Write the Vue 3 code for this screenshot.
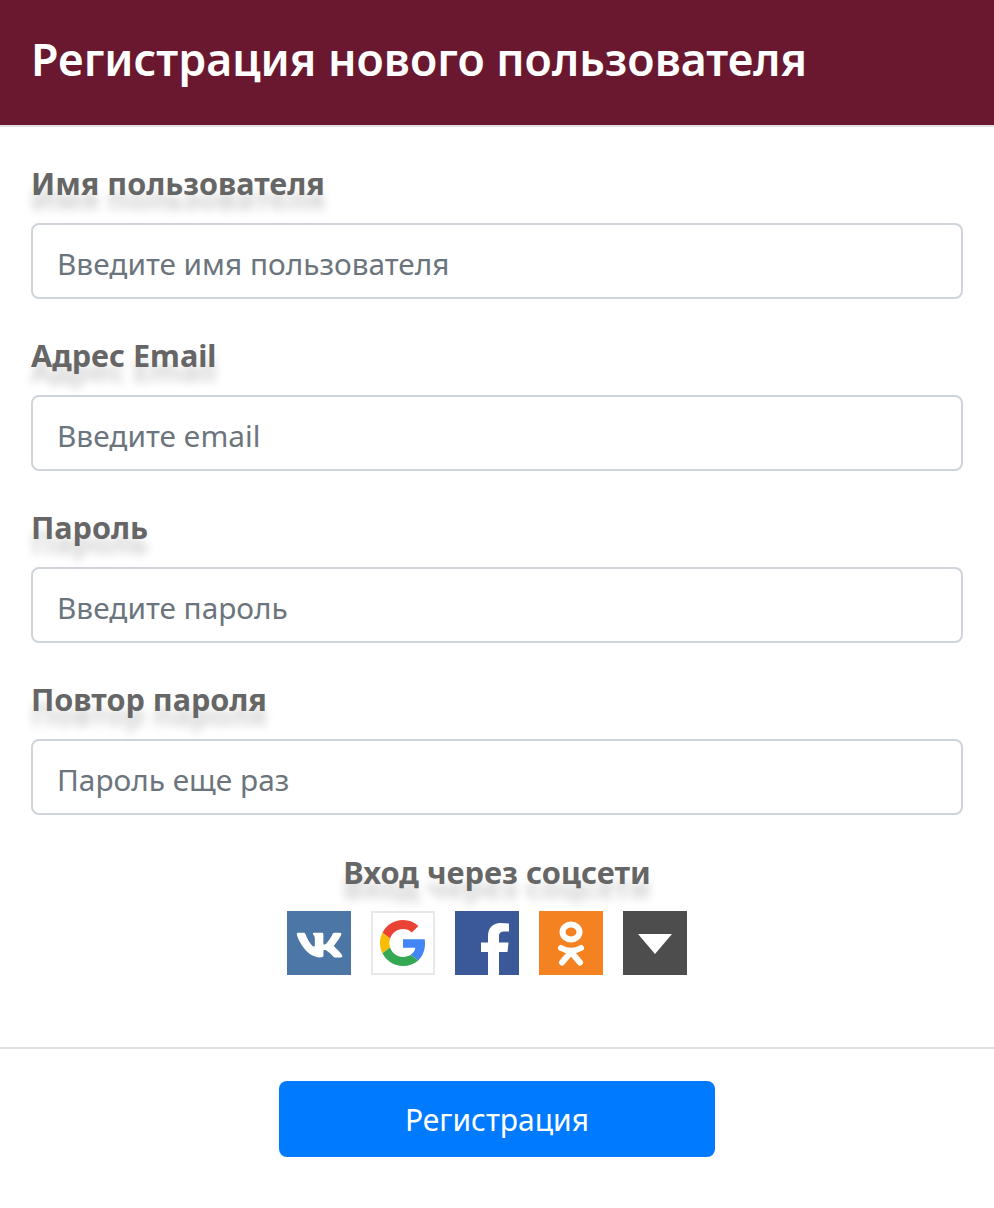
<template>
  <div class="modal">
    <header class="modal-header">
      <h1 class="modal-title">Регистрация нового пользователя</h1>
    </header>

    <form class="modal-body" @submit.prevent>
      <div v-for="field in fields" :key="field.label" class="form-group">
        <label class="form-label">{{ field.label }}</label>
        <input class="form-control" :type="field.inputType" :placeholder="field.placeholder" />
      </div>

      <div class="social">
        <div class="social-title">Вход через соцсети</div>
        <div class="social-list">
          <a class="social-btn vk" aria-label="VK">
            <svg viewBox="0 0 64 64" width="64" height="64">
              <path
                fill="#fff"
                transform="translate(-1.7,1.9) scale(2.85,2.6)"
                d="M19.376 17.123h-1.744c-.66 0-.864-.525-2.05-1.727-1.033-1-1.49-1.135-1.744-1.135-.356 0-.458.102-.458.593v1.575c0 .424-.135.678-1.253.678-1.846 0-3.896-1.118-5.335-3.202C4.624 10.857 4.03 8.57 4.03 8.096c0-.254.102-.491.593-.491h1.744c.44 0 .61.203.78.677.863 2.49 2.303 4.675 2.896 4.675.22 0 .322-.102.322-.66V9.721c-.068-1.186-.695-1.287-.695-1.71 0-.204.17-.407.44-.407h2.744c.373 0 .508.203.508.643v3.473c0 .372.17.508.271.508.22 0 .407-.136.813-.542 1.254-1.406 2.151-3.574 2.151-3.574.119-.254.322-.491.763-.491h1.744c.525 0 .644.27.525.643-.22 1.017-2.354 4.031-2.354 4.031-.186.305-.254.44 0 .78.186.254.796.779 1.203 1.253.745.847 1.32 1.558 1.473 2.05.17.49-.085.744-.576.744z"
              />
            </svg>
          </a>
          <a class="social-btn google" aria-label="Google">
            <svg viewBox="0 0 48 48" width="46" height="46">
              <path fill="#EA4335" d="M24 9.500c3.540 0 6.710 1.220 9.210 3.600l6.850-6.850C35.900 2.380 30.470 0 24 0 14.620 0 6.510 5.380 2.560 13.220l7.980 6.190C12.430 13.720 17.740 9.500 24 9.500z" />
              <path fill="#4285F4" d="M46.980 24.550c0-1.570-.15-3.090-.38-4.550H24v9.020h12.940c-.58 2.960-2.260 5.480-4.780 7.180l7.730 6c4.510-4.180 7.090-10.360 7.090-17.650z" />
              <path fill="#FBBC05" d="M10.530 28.590c-.48-1.450-.76-2.990-.76-4.590s.27-3.140.76-4.590l-7.980-6.190C.92 16.460 0 20.120 0 24c0 3.880.92 7.540 2.560 10.780l7.970-6.190z" />
              <path fill="#34A853" d="M24 48c6.480 0 11.930-2.130 15.890-5.810l-7.730-6c-2.150 1.450-4.920 2.300-8.160 2.300-6.260 0-11.570-4.220-13.470-9.910l-7.980 6.190C6.510 42.620 14.620 48 24 48z" />
            </svg>
          </a>
          <a class="social-btn fb" aria-label="Facebook">
            <svg viewBox="0 0 64 64" width="64" height="64">
              <path fill="#fff" d="M33 64V41h-7v-9.500h7V25c0-8 5-13 12.500-13 3 0 5.500.2 8.500.5v8h-5c-3.500 0-5 1.500-5 4.500v6.500h9.500L52.500 41H44v23z" />
            </svg>
          </a>
          <a class="social-btn ok" aria-label="OK">
            <svg viewBox="0 0 64 64" width="64" height="64">
              <ellipse cx="32" cy="21" rx="8.500" ry="7.500" fill="none" stroke="#fff" stroke-width="6" />
              <path fill="none" stroke="#fff" stroke-width="6" stroke-linecap="round" d="M22 37c6 3.500 14 3.500 20 0M32 41l-9 10.500M32 41l9 10.500" />
            </svg>
          </a>
          <a class="social-btn more" aria-label="Ещё">
            <svg viewBox="0 0 64 64" width="64" height="64">
              <path fill="#fff" d="M15 23h34L32 43z" />
            </svg>
          </a>
        </div>
      </div>
    </form>

    <footer class="modal-footer">
      <button class="btn-primary" type="button">Регистрация</button>
    </footer>
  </div>
</template>

<script setup>
const fields = [
  { label: 'Имя пользователя', inputType: 'text', placeholder: 'Введите имя пользователя' },
  { label: 'Адрес Email', inputType: 'email', placeholder: 'Введите email' },
  { label: 'Пароль', inputType: 'password', placeholder: 'Введите пароль' },
  { label: 'Повтор пароля', inputType: 'password', placeholder: 'Пароль еще раз' }
];
</script>

<style>
html,
body {
  margin: 0;
  background: #fff;
}
</style>

<style scoped>
.modal {
  height: 1208px;
  font-family: "Noto Sans", "Open Sans", sans-serif;
  color: #212529;
  background: #fff;
}

.modal-header {
  height: 127px;
  padding: 0 31px 8px;
  box-sizing: border-box;
  display: flex;
  align-items: center;
  background: #6a182f;
  border-bottom: 2px solid #e4dfe2;
}

.modal-title {
  margin: 0;
  font-size: 44.7px;
  line-height: 1.5;
  font-weight: 600;
  color: #fff;
}

.modal-body {
  padding: 32px 31px 0;
  height: 922px;
  box-sizing: border-box;
  border-bottom: 2px solid #dee2e6;
}

.form-group {
  margin-bottom: 32px;
}

.form-label {
  display: block;
  height: 48px;
  margin-bottom: 16px;
  font-size: 30.6px;
  line-height: 48px;
  font-weight: 700;
  color: #666;
  text-shadow: 0 15px 10px rgba(0, 0, 0, 0.18);
}

.form-control {
  display: block;
  width: 100%;
  height: 76px;
  box-sizing: border-box;
  padding: 16px 24px 12px;
  margin: 0;
  font: 400 29.8px/48px "Noto Sans", "Open Sans", sans-serif;
  color: #495057;
  background: #fff;
  border: 2px solid #ced4da;
  border-radius: 8px;
  outline: none;
}

.form-control::placeholder {
  color: #6c757d;
  opacity: 1;
}

.social {
  text-align: center;
}

.social-title {
  height: 48px;
  font-size: 30.8px;
  line-height: 50px;
  font-weight: 700;
  color: #666;
  text-shadow: 0 15px 10px rgba(0, 0, 0, 0.18);
}

.social-list {
  display: flex;
  justify-content: center;
  gap: 20px;
  margin-top: 16px;
  padding-right: 20px;
}

.social-btn {
  display: flex;
  align-items: center;
  justify-content: center;
  width: 64px;
  height: 64px;
  box-sizing: border-box;
  overflow: hidden;
}

.vk { background: #4b76a5; }
.fb { background: #3b5998; }
.ok { background: #f58220; }
.more { background: #4d4d4d; }

.google {
  background: #fff;
  border: 2px solid #e8e8e8;
}

.modal-footer {
  display: flex;
  justify-content: center;
  padding-top: 32px;
}

.btn-primary {
  width: 436px;
  height: 76px;
  padding: 2px 0 0;
  font: 400 30px/48px "Noto Sans", "Open Sans", sans-serif;
  color: #fff;
  background: #007bff;
  border: 0;
  border-radius: 8px;
}
</style>
